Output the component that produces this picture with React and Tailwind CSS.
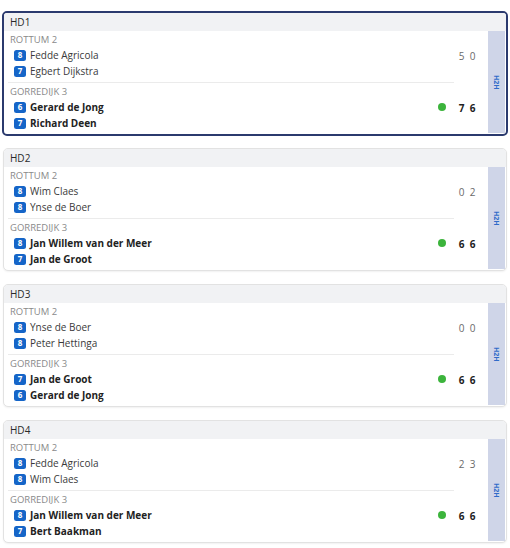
import React from 'react';

const matches = [
  {
    id: 'HD1',
    active: true,
    home: { team: 'Rottum 2', players: [['8', 'Fedde Agricola'], ['7', 'Egbert Dijkstra']], score: ['5', '0'] },
    away: { team: 'Gorredijk 3', players: [['6', 'Gerard de Jong'], ['7', 'Richard Deen']], score: ['7', '6'] },
  },
  {
    id: 'HD2',
    home: { team: 'Rottum 2', players: [['8', 'Wim Claes'], ['8', 'Ynse de Boer']], score: ['0', '2'] },
    away: { team: 'Gorredijk 3', players: [['8', 'Jan Willem van der Meer'], ['7', 'Jan de Groot']], score: ['6', '6'] },
  },
  {
    id: 'HD3',
    home: { team: 'Rottum 2', players: [['8', 'Ynse de Boer'], ['8', 'Peter Hettinga']], score: ['0', '0'] },
    away: { team: 'Gorredijk 3', players: [['7', 'Jan de Groot'], ['6', 'Gerard de Jong']], score: ['6', '6'] },
  },
  {
    id: 'HD4',
    home: { team: 'Rottum 2', players: [['8', 'Fedde Agricola'], ['8', 'Wim Claes']], score: ['2', '3'] },
    away: { team: 'Gorredijk 3', players: [['8', 'Jan Willem van der Meer'], ['7', 'Bert Baakman']], score: ['6', '6'] },
  },
];

function Badge({ value }) {
  return (
    <span className="flex h-[11px] w-[12px] items-center justify-center rounded-[2.5px] bg-[#1565c8] text-[8px] font-bold leading-none text-white">
      {value}
    </span>
  );
}

function TeamBlock({ side, winner }) {
  return (
    <div className="pt-[2px] pb-[3px]">
      <div className="h-[14px] pl-[6px] text-[9.5px] leading-[14px] uppercase text-[#8a8a8a]">{side.team}</div>
      {side.players.map(([rank, name], i) => (
        <div key={i} className="flex h-[16px] items-center pl-[10px]">
          <Badge value={rank} />
          <span className={`ml-[4px] text-[10px] leading-none ${winner ? 'font-bold text-[#222]' : 'text-[#3a3a3a]'}`}>
            {name}
          </span>
          {i === 0 && (
            <div className="ml-auto flex items-center">
              {winner && <span className="mr-[8px] h-[8px] w-[8px] rounded-full bg-[#3cb43c]" />}
              <div className={`flex w-[34px] pl-[2px] pt-[2px] text-[10px] ${winner ? 'font-bold text-[#222]' : 'text-[#6a6a6a]'}`}>
                {side.score.map((s, k) => (
                  <span key={k} className="w-[11px] text-center">{s}</span>
                ))}
              </div>
            </div>
          )}
        </div>
      ))}
    </div>
  );
}

function MatchCard({ match }) {
  const frame = match.active
    ? 'border-2 border-[#2b3a6e]'
    : 'm-px border border-[#e2e2e2] shadow-[0_1px_2px_rgba(0,0,0,0.06)]';
  return (
    <div className={`overflow-hidden rounded-[5px] bg-white ${frame}`}>
      <div className="flex h-[18px] items-center bg-[#f1f2f4] pl-[6px] text-[10px] font-medium text-[#2a2a2a]">
        {match.id}
      </div>
      <div className="flex">
        <div className="flex-1">
          <TeamBlock side={match.home} />
          <div className="ml-[4px] mr-[34px] h-px bg-[#ebebeb]" />
          <TeamBlock side={match.away} winner />
        </div>
        <div className="mr-px mb-px flex w-[17px] items-center justify-center bg-[#cfd5e8]">
          <span className="text-[7px] font-bold leading-none text-[#2f6bc9] [writing-mode:vertical-rl]">H2H</span>
        </div>
      </div>
    </div>
  );
}

export default function App() {
  return (
    <div
      className="min-h-[548px] w-[510px] bg-white px-[2px] pt-[11px]"
      style={{ fontFamily: '"Open Sans", "Noto Sans", sans-serif' }}
    >
      <div className="flex flex-col gap-[11px]">
        {matches.map((m) => (
          <MatchCard key={m.id} match={m} />
        ))}
      </div>
    </div>
  );
}
